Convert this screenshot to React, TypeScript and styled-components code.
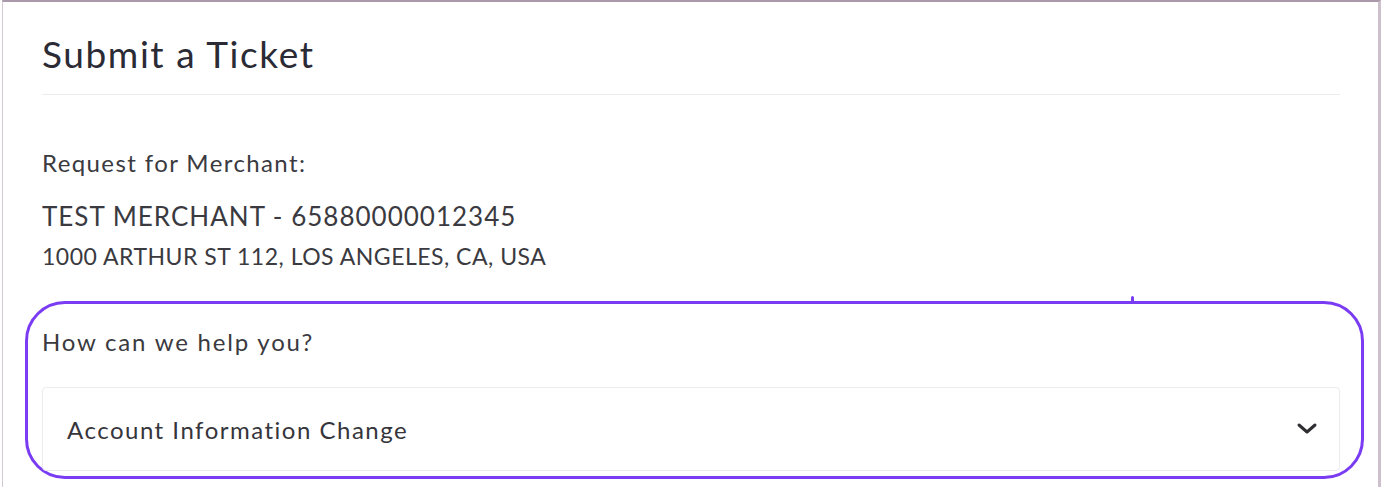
import React from 'react';
import styled, { createGlobalStyle } from 'styled-components';

const GlobalStyle = createGlobalStyle`
    html, body {
        margin: 0;
        padding: 0;
        background: #ffffff;
    }
    body {
        font-family: Lato, "Noto Sans", "Liberation Sans", sans-serif;
        color: #38383d;
    }
`;

const Card = styled.div`
    margin-left: 2px;
    width: 1379px;
    box-sizing: border-box;
    min-height: 487px;
    background: #fff;
    border-top: 2px solid #a999aa;
    border-left: 1px solid #d3cad3;
    border-right: 3px solid #cbc0cb;
    padding: 30px 38px 0 39px;
`;

const Title = styled.h1`
    margin: 0;
    font-size: 37px;
    line-height: 44px;
    font-weight: 400;
    letter-spacing: 1.6px;
    color: #2b2b35;
    padding-bottom: 18px;
    border-bottom: 1px solid #ededed;
`;

const Text = styled.div<{ size: number; lh: number; mt: number; ls: number }>`
    font-size: ${(p) => p.size}px;
    line-height: ${(p) => p.lh}px;
    margin-top: ${(p) => p.mt}px;
    letter-spacing: ${(p) => p.ls}px;
    color: #3a3a40;
`;

const Highlight = styled.section`
    position: relative;
    margin: 31px -24px 0 -17px;
    border: 3px solid #7a3cf2;
    border-radius: 40px;
    padding: 23px 21px 5px 14px;

    &::before {
        content: '';
        position: absolute;
        top: -8px;
        left: 1103px;
        width: 3px;
        height: 6px;
        border-radius: 2px;
        background: #7a3cf2;
    }
`;

const Select = styled.div`
    margin-top: 30px;
    height: 84px;
    box-sizing: border-box;
    border: 1px solid #ececec;
    border-radius: 4px;
    display: flex;
    align-items: center;
    justify-content: space-between;
    padding: 0 21px 0 24px;
    font-size: 24px;
    letter-spacing: 1.5px;
    color: #35353b;
`;

function Chevron() {
    return (
        <svg width="22" height="14" viewBox="0 0 22 14" fill="none">
            <polyline
                points="3,3 11,10 19,3"
                stroke="#2e2e33"
                strokeWidth="3"
                strokeLinecap="round"
                strokeLinejoin="round"
            />
        </svg>
    );
}

export default function App() {
    return (
        <>
            <GlobalStyle />
            <Card>
                <Title>Submit a Ticket</Title>
                <Text size={24} lh={30} mt={53} ls={1.4}>
                    Request for Merchant:
                </Text>
                <Text size={26} lh={32} mt={22} ls={1}>
                    TEST MERCHANT - 65880000012345
                </Text>
                <Text size={23} lh={28} mt={10} ls={0.5}>
                    1000 ARTHUR ST 112, LOS ANGELES, CA, USA
                </Text>
                <Highlight>
                    <Text size={24} lh={30} mt={0} ls={1.8}>
                        How can we help you?
                    </Text>
                    <Select>
                        <span>Account Information Change</span>
                        <Chevron />
                    </Select>
                </Highlight>
            </Card>
        </>
    );
}
